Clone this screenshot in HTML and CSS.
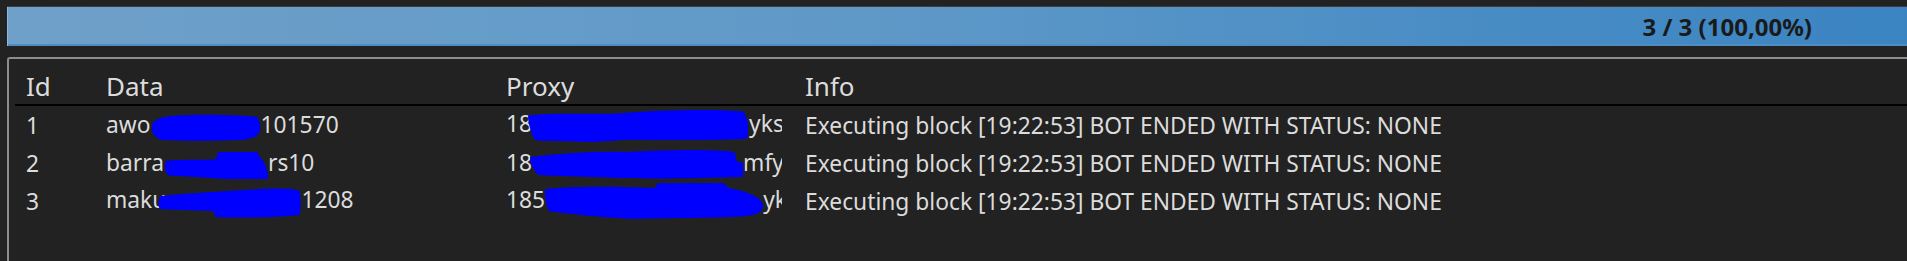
FILE: index.html
```html
<!DOCTYPE html>
<html lang="en">
<head>
    <meta charset="UTF-8">
    <title>Runner</title>
    <link rel="stylesheet" href="styles.css">
</head>
<body>
    <div class="progress">
        <span class="progress-text">3 / 3 (100,00%)</span>
    </div>

    <div class="panel">
        <div class="row head">
            <div class="cell c-id">Id</div>
            <div class="cell c-data">Data</div>
            <div class="cell c-proxy">Proxy</div>
            <div class="cell c-info">Info</div>
        </div>
        <div class="row">
            <div class="cell c-id">1</div>
            <div class="cell c-data">awo<svg class="blob d1" viewBox="0 0 100 30" preserveAspectRatio="none"><path d="M1,12 C3,5 12,3 20,2 C45,0 75,1 96,3 C99,8 100,14 99,18 C98,24 94,28 80,29 C55,30 30,30 12,29 C4,28 0,22 1,12 Z"/></svg>101570</div>
            <div class="cell c-proxy clip">18<svg class="blob p1" viewBox="0 0 100 30" preserveAspectRatio="none"><path d="M0,6 C10,3 25,5 40,4 C60,1 80,0 97,2 C100,6 100,22 99,27 C80,29 60,28 45,28 L30,30 C18,29 8,30 3,28 C1,20 0,12 0,6 Z"/></svg>yks</div>
            <div class="cell c-info">Executing block [19:22:53] BOT ENDED WITH STATUS: NONE</div>
        </div>
        <div class="row">
            <div class="cell c-id">2</div>
            <div class="cell c-data">barra<svg class="blob d2" viewBox="0 0 100 30" preserveAspectRatio="none"><path d="M2,10 C10,8 40,9 50,8 L52,0 L90,0 L92,6 C97,10 100,20 100,30 L60,30 C40,28 20,27 4,26 C0,20 0,14 2,10 Z"/></svg>rs10</div>
            <div class="cell c-proxy clip">18<svg class="blob p2" viewBox="0 0 100 30" preserveAspectRatio="none"><path d="M0,8 C15,4 30,2 45,3 C65,1 85,0 96,3 L97,12 L100,14 L100,28 C80,29 60,30 45,29 C30,28 15,27 4,26 C1,20 0,14 0,8 Z"/></svg>mfyy</div>
            <div class="cell c-info">Executing block [19:22:53] BOT ENDED WITH STATUS: NONE</div>
        </div>
        <div class="row">
            <div class="cell c-id">3</div>
            <div class="cell c-data">maku<svg class="blob d3" viewBox="0 0 100 30" preserveAspectRatio="none"><path d="M2,8 C20,5 50,3 70,1 C85,0 95,0 99,3 C100,12 100,22 99,27 C80,30 60,30 40,29 L39,23 C25,22 10,22 1,21 C0,16 0,12 2,8 Z"/></svg>1208</div>
            <div class="cell c-proxy clip">185<svg class="blob p3" viewBox="0 0 100 30" preserveAspectRatio="none"><path d="M0,5 C15,2 35,3 50,4 L52,0 L82,0 L84,4 C92,6 100,12 100,18 C100,26 95,27 80,28 L40,29 C25,28 10,25 2,23 C0,16 0,10 0,5 Z"/></svg>yk</div>
            <div class="cell c-info">Executing block [19:22:53] BOT ENDED WITH STATUS: NONE</div>
        </div>
    </div>
</body>
</html>
```

FILE: styles.css
```css
html, body {
    height: 100%;
    overflow: hidden;
}

body {
    margin: 0;
    padding: 6px 0 0 7px;
    box-sizing: border-box;
    background: #222222;
    font-family: "Noto Sans", "Open Sans", sans-serif;
    color: #dcdcdc;
    display: flex;
    flex-direction: column;
}

/* top progress bar */
.progress {
    height: 39px;
    flex-shrink: 0;
    border-top: 1px solid #3d3d40;
    background: linear-gradient(to right, #6fa0c9, #5f99c8 45%, #3a84c2);
    box-shadow: inset 1px 0 0 #8db6da, inset 0 -2px 0 #4f8cc4;
    display: flex;
    align-items: center;
    justify-content: flex-end;
    padding-right: 95px;
}

.progress-text {
    font-weight: bold;
    font-size: 24px;
    color: #1a1a1a;
}

/* list panel */
.panel {
    flex: 1;
    margin-top: 11px;
    border-top: 2px solid #8a8c91;
    border-left: 2px solid #8a8c91;
    border-top-left-radius: 3px;
    padding-left: 6px;
}

.row {
    display: flex;
    height: 38px;
    align-items: center;
    font-size: 22.8px;
    white-space: nowrap;
}

.row.head {
    height: 45px;
    font-size: 26px;
    border-bottom: 2px solid #000;
    align-items: flex-end;
    line-height: 1.3;
}

.cell {
    box-sizing: border-box;
    padding-left: 11px;
    flex-shrink: 0;
}

.c-id { width: 80px; }
.c-data { width: 400px; }
.c-proxy { width: 287px; }
.c-proxy.clip { overflow: hidden; }
.c-info { flex: 1; padding-left: 23px; }

/* redaction marks */
.blob {
    display: inline-block;
    fill: #0000ff;
    vertical-align: middle;
}

.d1 { width: 110px; height: 27px; }
.d2 { width: 104px; height: 27px; }
.d3 { width: 143px; height: 30px; margin-left: -8px; vertical-align: -10px; }
.p1 { width: 221px; height: 33px; margin-left: -4px; }
.p2 { width: 213px; height: 30px; margin-left: -2px; }
.p3 { width: 218px; height: 37px; vertical-align: -12px; }
```
